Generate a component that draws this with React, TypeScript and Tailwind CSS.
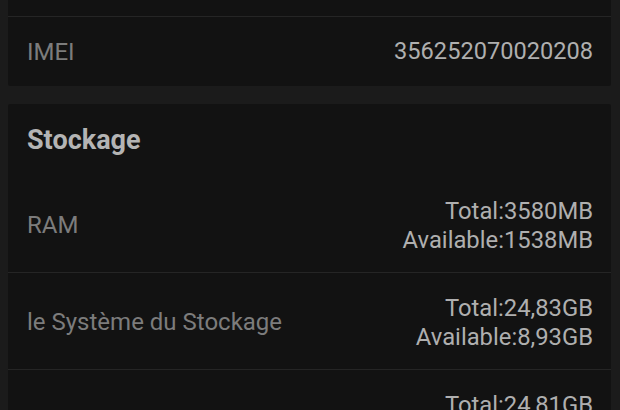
type Row = {
  label: string;
  values: string[];
};

const storageRows: Row[] = [
  { label: "RAM", values: ["Total:3580MB", "Available:1538MB"] },
  { label: "le Système du Stockage", values: ["Total:24,83GB", "Available:8,93GB"] },
  { label: "", values: ["Total:24,81GB", "Available:8,91GB"] },
];

function InfoRow({ label, values, first }: Row & { first?: boolean }) {
  return (
    <div
      className={`flex items-center justify-between pl-[19px] pr-[18px] pt-[21px] pb-[18px] ${
        first ? "" : "border-t border-[#252525]"
      }`}
    >
      <span className="text-[24px] leading-[28.5px] text-[#7c7c7c]">{label}</span>
      <div className="flex flex-col items-end text-[23.8px] leading-[28.5px] text-[#afafaf]">
        {values.map((v) => (
          <span key={v}>{v}</span>
        ))}
      </div>
    </div>
  );
}

export default function App() {
  return (
    <div
      className="h-[410px] w-[620px] overflow-hidden bg-[#1b1b1b]"
      style={{ fontFamily: "Roboto, 'Noto Sans', sans-serif" }}
    >
      <div className="ml-[8px] w-[603px] rounded-b-[2px] bg-[#121212]">
        <div className="h-[16px]" />
        <div className="flex h-[70px] items-center justify-between border-t border-[#252525] pl-[19px] pr-[18px]">
          <span className="text-[24px] text-[#7c7c7c]">IMEI</span>
          <span className="text-[23.6px] text-[#afafaf]">356252070020208</span>
        </div>
      </div>

      <div className="ml-[8px] mt-[18px] w-[603px] rounded-[2px] bg-[#121212]">
        <div className="h-[72px] pl-[19px] pt-[21px] text-[27px] font-bold leading-[30px] text-[#b4b4b4]">
          Stockage
        </div>
        {storageRows.map((r, i) => (
          <InfoRow key={r.values[0]} {...r} first={i === 0} />
        ))}
      </div>
    </div>
  );
}
